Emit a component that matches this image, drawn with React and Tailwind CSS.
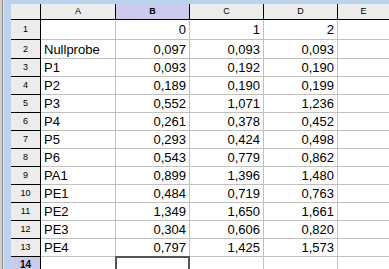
import React from "react";

const rows = [
  ["", "0", "1", "2"],
  ["Nullprobe", "0,097", "0,093", "0,093"],
  ["P1", "0,093", "0,192", "0,190"],
  ["P2", "0,189", "0,190", "0,199"],
  ["P3", "0,552", "1,071", "1,236"],
  ["P4", "0,261", "0,378", "0,452"],
  ["P5", "0,293", "0,424", "0,498"],
  ["P6", "0,543", "0,779", "0,862"],
  ["PA1", "0,899", "1,396", "1,480"],
  ["PE1", "0,484", "0,719", "0,763"],
  ["PE2", "1,349", "1,650", "1,661"],
  ["PE3", "0,304", "0,606", "0,820"],
  ["PE4", "0,797", "1,425", "1,573"],
];

const rowH = (i) => (i === 0 ? "h-[20px]" : i === 1 ? "h-[19px]" : "h-[18px]");

export default function App() {
  return (
    <div
      className="flex w-[389px] h-[269px] overflow-hidden bg-white"
      style={{ fontFamily: '"Liberation Sans", Arial, sans-serif' }}
    >
      {/* left window frame */}
      <div className="w-[2px] h-full bg-[#d4d0c8] shrink-0" />
      <div className="w-[1px] h-full bg-[#8c8c8c] shrink-0" />
      <div className="w-[1px] h-full bg-[#e4e4e4] shrink-0" />
      <div className="w-[7px] h-full bg-[#bcd2ec] shrink-0" />
      <div className="flex flex-col flex-1 min-w-0">
        <div className="h-[4px] shrink-0 bg-[#bcd2ec] -ml-[7px]" />
        {/* column header */}
        <div className="grid shrink-0 grid-cols-[30px_75px_74px_74px_74px_1fr] h-[16px] bg-[#ececec] border-b border-black text-[9px] text-black leading-none">
          <div className="border-r border-black" />
          <div className="border-r border-black flex items-center justify-center">A</div>
          <div className="border-r border-black flex items-center justify-center bg-[#cbcbef] font-bold">B</div>
          <div className="border-r border-black flex items-center justify-center">C</div>
          <div className="border-r border-black flex items-center justify-center">D</div>
          <div className="flex items-center justify-center">E</div>
        </div>
        {rows.map((r, i) => (
          <div
            key={i}
            className={`grid shrink-0 grid-cols-[30px_75px_74px_74px_74px_1fr] ${rowH(i)} text-[13px] text-black`}
          >
            <div className="bg-[#ececec] border-r border-b border-black flex items-center justify-center text-[9px] leading-none">
              {i + 1}
            </div>
            <div className="border-r border-b border-[#c0c0c0] flex items-center pl-[3px] leading-[17px] whitespace-nowrap">
              {r[0]}
            </div>
            <div className="border-r border-b border-[#c0c0c0] flex items-center justify-end pr-[3px] leading-[17px]">
              {r[1]}
            </div>
            <div className="border-r border-b border-[#c0c0c0] flex items-center justify-end pr-[3px] leading-[17px]">
              {r[2]}
            </div>
            <div className="border-r border-b border-[#c0c0c0] flex items-center justify-end pr-[3px] leading-[17px]">
              {r[3]}
            </div>
            <div className="border-b border-[#c0c0c0]" />
          </div>
        ))}
        <div className="grid shrink-0 grid-cols-[30px_75px_74px_74px_74px_1fr] h-[18px]">
          <div className="bg-[#cbcbef] border-r border-black flex items-start pt-[3px] justify-center text-[10px] font-bold leading-none text-black">
            14
          </div>
          <div className="border-r border-[#c0c0c0]" />
          <div className="border-[2px] border-[#555555] -mt-[1px] -ml-[1px]" />
          <div className="border-r border-[#c0c0c0]" />
          <div className="border-r border-[#c0c0c0]" />
          <div />
        </div>
      </div>
    </div>
  );
}
